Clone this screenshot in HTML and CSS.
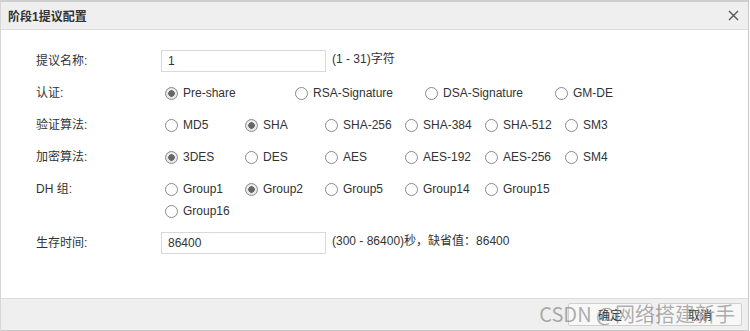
FILE: index.html
```html
<!DOCTYPE html>
<html lang="zh-CN">
<head>
    <meta charset="UTF-8">
    <meta name="viewport" content="width=device-width, initial-scale=1.0">
    <title>阶段1提议配置</title>
    <link rel="stylesheet" href="styles.css">
</head>
<body>
    <div class="dialog">
        <div class="dialog-head">
            <span class="dialog-title">阶段1提议配置</span>
            <span class="dialog-close">
                <svg width="11" height="11" viewBox="0 0 11 11"><path d="M1 1L10 10M10 1L1 10" stroke="#555" stroke-width="1.4" fill="none"/></svg>
            </span>
        </div>
        <div class="dialog-body">
            <div class="row">
                <label class="row-label" for="prop-name">提议名称:</label>
                <input type="text" id="prop-name" class="field" value="1">
                <span class="hint">(1 - 31)字符</span>
            </div>
            <div class="row">
                <span class="row-label">认证:</span>
                <div class="opts wide">
                    <label class="opt"><input type="radio" name="auth" checked>Pre-share</label>
                    <label class="opt"><input type="radio" name="auth">RSA-Signature</label>
                    <label class="opt"><input type="radio" name="auth">DSA-Signature</label>
                    <label class="opt"><input type="radio" name="auth">GM-DE</label>
                </div>
            </div>
            <div class="row">
                <span class="row-label">验证算法:</span>
                <div class="opts">
                    <label class="opt"><input type="radio" name="hash">MD5</label>
                    <label class="opt"><input type="radio" name="hash" checked>SHA</label>
                    <label class="opt"><input type="radio" name="hash">SHA-256</label>
                    <label class="opt"><input type="radio" name="hash">SHA-384</label>
                    <label class="opt"><input type="radio" name="hash">SHA-512</label>
                    <label class="opt"><input type="radio" name="hash">SM3</label>
                </div>
            </div>
            <div class="row">
                <span class="row-label">加密算法:</span>
                <div class="opts">
                    <label class="opt"><input type="radio" name="enc" checked>3DES</label>
                    <label class="opt"><input type="radio" name="enc">DES</label>
                    <label class="opt"><input type="radio" name="enc">AES</label>
                    <label class="opt"><input type="radio" name="enc">AES-192</label>
                    <label class="opt"><input type="radio" name="enc">AES-256</label>
                    <label class="opt"><input type="radio" name="enc">SM4</label>
                </div>
            </div>
            <div class="row">
                <span class="row-label">DH 组:</span>
                <div class="opts">
                    <label class="opt"><input type="radio" name="dh">Group1</label>
                    <label class="opt"><input type="radio" name="dh" checked>Group2</label>
                    <label class="opt"><input type="radio" name="dh">Group5</label>
                    <label class="opt"><input type="radio" name="dh">Group14</label>
                    <label class="opt"><input type="radio" name="dh">Group15</label>
                    <label class="opt"><input type="radio" name="dh">Group16</label>
                </div>
            </div>
            <div class="row last">
                <label class="row-label" for="lifetime">生存时间:</label>
                <input type="text" id="lifetime" class="field" value="86400">
                <span class="hint">(300 - 86400)秒，缺省值：86400</span>
            </div>
        </div>
        <div class="dialog-foot">
            <button class="btn">确定</button>
            <button class="btn">取消</button>
            <span class="watermark">CSDN @网络搭建新手</span>
        </div>
    </div>
</body>
</html>
```

FILE: styles.css
```css
body {
    margin: 0;
    padding: 0;
    background: #fff;
    font-family: "Liberation Sans", Arial, "Noto Sans CJK SC", sans-serif;
    font-size: 12px;
    color: #333;
}
.dialog {
    width: 747px;
    height: 329px;
    border-top: 2px solid #cfcfcf;
    border-left: 1px solid #d6d6d6;
    border-right: 1px solid #c8c8c8;
    display: flex;
    flex-direction: column;
    position: relative;
}
.dialog-head {
    height: 27px;
    background: #efefef;
    border-bottom: 1px solid #dcdcdc;
    display: flex;
    align-items: center;
    justify-content: space-between;
    padding: 0 8px 0 7px;
}
.dialog-title {
    font-weight: bold;
    color: #333;
}
.dialog-close {
    display: flex;
    margin-right: 1px;
}
.dialog-body {
    flex: 1;
    padding: 20px 0 0 35px;
}
.row {
    display: flex;
    align-items: flex-start;
    min-height: 22px;
    margin-bottom: 10px;
}
.row.last {
    margin-top: 2px;
}
.row-label {
    width: 125px;
    line-height: 22px;
    flex: none;
}
.field {
    width: 165px;
    height: 22px;
    box-sizing: border-box;
    border: 1px solid #d9d9d9;
    padding: 0 6px;
    font: inherit;
    color: #333;
    outline: none;
}
.hint {
    margin-left: 6px;
    line-height: 18px;
}
.opts {
    display: flex;
    flex-wrap: wrap;
    width: 455px;
    margin-left: 4px;
}
.opt {
    width: 80px;
    height: 22px;
    display: flex;
    align-items: center;
}
.opts.wide .opt {
    width: 130px;
}
.opts .opt:last-child {
    width: auto;
}
.opt input {
    appearance: none;
    -webkit-appearance: none;
    width: 13px;
    height: 13px;
    margin: 0 5px 0 0;
    border: 1px solid #8a8a8a;
    border-radius: 50%;
    background: #fff;
    box-sizing: border-box;
}
.opt input:checked {
    background: radial-gradient(circle, #666 0 3px, #e8e8e8 3.5px);
}
.dialog-foot {
    height: 33px;
    background: #efefef;
    border-top: 1px solid #dcdcdc;
    border-bottom: 1px solid #c8c8c8;
    display: flex;
    justify-content: flex-end;
    align-items: flex-start;
    gap: 6px;
    padding: 4px 6px 0 0;
    box-sizing: border-box;
}
.btn {
    width: 84px;
    height: 23px;
    background: #f8f8f8;
    border: 1px solid #cfcfcf;
    border-radius: 2px;
    font: inherit;
    color: #333;
    padding: 0;
}
.watermark {
    position: absolute;
    right: 13px;
    bottom: 3px;
    font-family: "Noto Sans CJK SC", sans-serif;
    font-size: 20px;
    color: rgba(120, 120, 120, 0.6);
    pointer-events: none;
}
```
